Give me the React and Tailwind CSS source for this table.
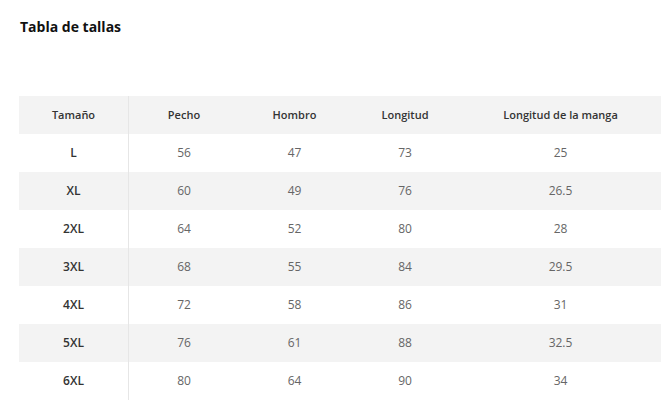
export default function App() {
  const rows = [
    ["L", "56", "47", "73", "25"],
    ["XL", "60", "49", "76", "26.5"],
    ["2XL", "64", "52", "80", "28"],
    ["3XL", "68", "55", "84", "29.5"],
    ["4XL", "72", "58", "86", "31"],
    ["5XL", "76", "61", "88", "32.5"],
    ["6XL", "80", "64", "90", "34"],
  ];
  const widths = ["w-[110px]", "w-[110px]", "w-[111px]", "w-[110px]", "flex-1"];
  const headers = ["Tamaño", "Pecho", "Hombro", "Longitud", "Longitud de la manga"];
  return (
    <div className="w-[668px] h-[400px] bg-white overflow-hidden" style={{ fontFamily: '"Open Sans", "Noto Sans", sans-serif' }}>
      <div className="pl-[20px] pt-[17px] h-[96px]">
        <h1 className="text-[14px] font-bold text-[#111] leading-[20px]">Tabla de tallas</h1>
      </div>
      <div className="ml-[19px] w-[642px]">
        <div className="flex h-[38px] bg-[#f3f3f3] items-center">
          {headers.map((h, i) => (
            <div key={i} className={`${widths[i]} h-full flex items-center justify-center text-[11px] font-semibold text-[#333] ${i === 0 ? "border-r border-[#e6e6e6]" : ""}`}>
              {h}
            </div>
          ))}
        </div>
        {rows.map((r, ri) => (
          <div key={ri} className={`flex h-[38px] ${ri % 2 === 1 ? "bg-[#f3f3f3]" : "bg-white"}`}>
            {r.map((c, i) => (
              <div key={i} className={`${widths[i]} h-full flex items-center justify-center text-[12px] ${i === 0 ? "font-semibold text-[#333] border-r border-[#e6e6e6]" : "text-[#666]"}`}>
                {c}
              </div>
            ))}
          </div>
        ))}
      </div>
    </div>
  );
}
